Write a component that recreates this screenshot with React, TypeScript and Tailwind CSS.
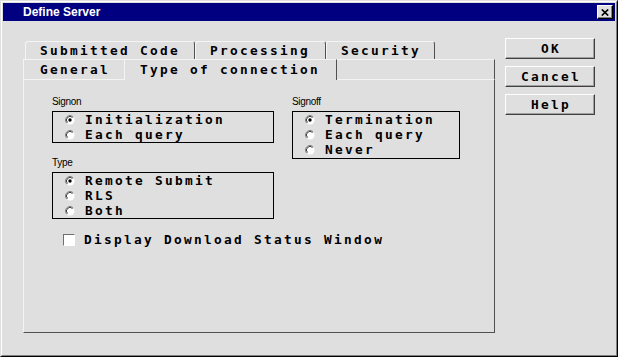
import React from "react";

const mono = "font-['DejaVu_Sans_Mono',monospace] font-bold text-[12.8px] tracking-[2.3px] text-black whitespace-nowrap";
const small = "font-['Liberation_Sans',Arial,sans-serif] text-[10px] leading-[12px] tracking-[-0.3px] text-black";

function Radio({ checked }: { checked?: boolean }) {
  return (
    <svg width="10" height="10" viewBox="0 0 10 10" className="shrink-0">
      <circle cx="5" cy="5" r="4.5" fill="#fff" />
      <path d="M1.8 8.2 A4.5 4.5 0 0 1 8.2 1.8" stroke="#808080" strokeWidth="1" fill="none" />
      <path d="M2.5 7.5 A3.5 3.5 0 0 1 7.5 2.5" stroke="#404040" strokeWidth="1" fill="none" />
      {checked && <circle cx="5" cy="5" r="1.7" fill="#000" />}
    </svg>
  );
}

function Option({ label, checked }: { label: string; checked?: boolean }) {
  return (
    <div className="flex h-[15px] items-center pl-[12px]">
      <Radio checked={checked} />
      <span className={`ml-[10px] leading-[15px] ${mono}`}>{label}</span>
    </div>
  );
}

function Group({ title, height, children }: { title: string; height: string; children: React.ReactNode }) {
  return (
    <div>
      <div className={small}>{title}</div>
      <div className={`mt-[3px] ${height} border border-black`}>{children}</div>
    </div>
  );
}

function BackTab({ label, width }: { label: string; width: string }) {
  return (
    <div
      className={`${width} h-[18px] rounded-t-[3px] border-t border-l border-r border-t-[#f4f4f4] border-l-[#f4f4f4] border-r-[#505050] pl-[14px] pt-[1px] leading-[15px] ${mono}`}
    >
      {label}
    </div>
  );
}

function Button({ label }: { label: string }) {
  return (
    <div
      className={`flex h-[21px] w-[90px] items-center justify-center border border-t-white border-l-white border-r-[#404040] border-b-[#404040] pl-[2px] leading-[15px] shadow-[inset_-1px_-1px_0_#a0a0a0] ${mono}`}
    >
      {label}
    </div>
  );
}

export default function App() {
  return (
    <div className="h-[357px] w-[618px] border border-t-[#dfdfdf] border-l-[#dfdfdf] border-r-black border-b-black bg-[#dfdfdf]">
      <div className="h-full border border-t-white border-l-white border-r-[#808080] border-b-[#808080] p-[1px]">
        {/* title bar */}
        <div className="flex h-[18px] items-center justify-between bg-[#000080] pl-[20px] pr-[2px]">
          <span className="font-['Liberation_Sans',Arial,sans-serif] text-[12px] font-bold leading-[18px] text-white">
            Define Server
          </span>
          <div className="flex h-[14px] w-[16px] items-center justify-center border border-t-white border-l-white border-r-black border-b-black bg-[#dfdfdf] shadow-[inset_-1px_-1px_0_#808080]">
            <svg width="8" height="7" viewBox="0 0 8 7">
              <path d="M0.8 0.5 L7.2 6.5 M7.2 0.5 L0.8 6.5" stroke="#000" strokeWidth="1.7" />
            </svg>
          </div>
        </div>

        <div className="flex items-start">
          {/* tabs + panel */}
          <div className="ml-[20px] mt-[20px] w-[472px]">
            <div className="flex pl-[2px]">
              <BackTab label="Submitted Code" width="w-[170px]" />
              <BackTab label="Processing" width="w-[131px]" />
              <BackTab label="Security" width="w-[109px]" />
            </div>
            <div className="flex h-[21px]">
              <div className={`w-[101px] border-t border-l border-b border-[#f4f4f4] pl-[16px] pt-[2px] leading-[15px] ${mono}`}>
                General
              </div>
              <div
                className={`w-[213px] border-t border-l border-r border-t-[#f4f4f4] border-l-[#f4f4f4] border-r-[#505050] pl-[15px] pt-[2px] leading-[15px] ${mono}`}
              >
                Type of connection
              </div>
              <div className="flex-1 border-t border-b border-r border-t-[#f4f4f4] border-b-[#f4f4f4] border-r-[#505050]" />
            </div>
            <div className="h-[253px] border-l border-r border-b border-l-[#f4f4f4] border-r-[#505050] border-b-[#505050]">
              <div className="flex pl-[28px] pt-[16px]">
                <div className="w-[222px]">
                  <Group title="Signon" height="h-[32px]">
                    <Option label="Initialization" checked />
                    <Option label="Each query" />
                  </Group>
                  <div className="mt-[14px]">
                    <Group title="Type" height="h-[47px]">
                      <Option label="Remote Submit" checked />
                      <Option label="RLS" />
                      <Option label="Both" />
                    </Group>
                  </div>
                  <div className="ml-[11px] mt-[13px] flex items-center">
                    <div className="h-[12px] w-[12px] shrink-0 border border-t-[#707070] border-l-[#707070] border-r-white border-b-white bg-white" />
                    <span className={`ml-[9px] leading-[15px] ${mono}`}>Display Download Status Window</span>
                  </div>
                </div>
                <div className="ml-[18px] w-[168px]">
                  <Group title="Signoff" height="h-[48px]">
                    <Option label="Termination" checked />
                    <Option label="Each query" />
                    <Option label="Never" />
                  </Group>
                </div>
              </div>
            </div>
          </div>

          {/* buttons */}
          <div className="ml-[10px] mt-[17px] flex flex-col gap-[7px]">
            <Button label="OK" />
            <Button label="Cancel" />
            <Button label="Help" />
          </div>
        </div>
      </div>
    </div>
  );
}
